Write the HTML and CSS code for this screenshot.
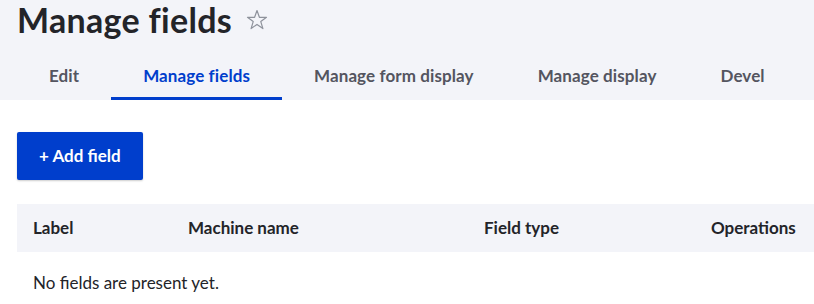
FILE: index.html
```html
<!DOCTYPE html>
<html lang="en">
<head>
  <meta charset="UTF-8" />
  <title>Manage fields</title>
  <link rel="stylesheet" href="styles.css">
</head>
<body>

  <div class="page-header">
    <h1 class="page-title">
      Manage fields
      <button class="shortcut" title="Add to Default shortcuts">
        <svg width="22" height="22" viewBox="0 0 22 22">
          <polygon points="11,1.5 13.4,8.3 20.5,8.3 14.8,12.6 16.9,19.6 11,15.4 5.1,19.6 7.2,12.6 1.5,8.3 8.6,8.3" fill="none" stroke="#8e929c" stroke-width="1.2" stroke-linejoin="round"/>
        </svg>
      </button>
    </h1>

    <nav class="tabs">
      <a class="tab" href="#">Edit</a>
      <a class="tab active" href="#">Manage fields</a>
      <a class="tab" href="#">Manage form display</a>
      <a class="tab" href="#">Manage display</a>
      <a class="tab" href="#">Devel</a>
    </nav>
  </div>

  <div class="content">
    <a class="button" href="#">+ Add field</a>

    <table class="field-table">
      <thead>
        <tr>
          <th class="col-label">Label</th>
          <th class="col-machine">Machine name</th>
          <th class="col-type">Field type</th>
          <th class="col-ops">Operations</th>
        </tr>
      </thead>
      <tbody>
        <tr>
          <td colspan="4" class="empty">No fields are present yet.</td>
        </tr>
      </tbody>
    </table>
  </div>

</body>
</html>
```

FILE: styles.css
```css
body {
  margin: 0;
  font-family: Lato, "Noto Sans", sans-serif;
  color: #232429;
  background: white;
}

.page-header {
  background: #f3f4f9;
  padding: 0 0 0 17px;
}

.page-title {
  margin: 0;
  font-size: 34px;
  letter-spacing: 0.3px;
  line-height: 40px;
  font-weight: 700;
  display: flex;
  align-items: center;
}

.shortcut {
  background: none;
  border: none;
  padding: 0;
  margin: 0 0 0 14px;
  width: 22px;
  height: 22px;
  cursor: pointer;
}

.shortcut svg {
  display: block;
}

.tabs {
  display: flex;
  margin-top: 12px;
}

.tab {
  padding: 12px 32px 9px;
  font-size: 17px;
  letter-spacing: 0.1px;
  line-height: 24px;
  font-weight: 700;
  color: #545560;
  text-decoration: none;
  border-bottom: 3px solid transparent;
}

.tab.active {
  color: #003ecc;
  border-bottom-color: #003ecc;
}

.content {
  padding: 32px 0 0 17px;
}

.button {
  display: inline-block;
  background: #003ecc;
  color: white;
  font-size: 17px;
  font-weight: 700;
  line-height: 24px;
  padding: 12px 22px;
  border-radius: 2px;
  text-decoration: none;
  box-shadow: 0 1px 2px rgba(0,0,0,0.2);
}

.field-table {
  margin-top: 24px;
  width: 100%;
  border-collapse: collapse;
  table-layout: fixed;
}

.field-table th,
.field-table td {
  box-sizing: border-box;
  font-size: 17px;
  line-height: 24px;
  text-align: left;
}

.field-table th {
  background: #f3f4f9;
  font-weight: 700;
  padding: 12px 16px;
}

.col-label { width: 155px; }
.col-machine { width: 296px; }
.col-type { width: 227px; }

.field-table td {
  padding: 19px 16px;
}
```
